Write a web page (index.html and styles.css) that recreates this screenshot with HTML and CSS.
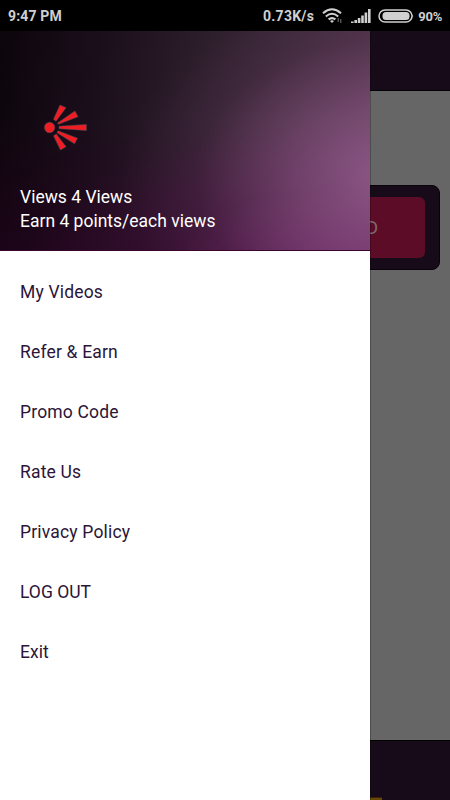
FILE: index.html
```html
<!DOCTYPE html>
<html lang="en">
<head>
<meta charset="utf-8">
<title>Views 4 Views</title>
<link rel="stylesheet" href="styles.css">
</head>
<body>
<div class="phone">
  <header class="status">
    <span class="time">9:47 PM</span>
    <span class="speed">0.73K/s</span>
    <svg class="wifi" width="22" height="16" viewBox="0 0 22 16" fill="none" stroke="#d0d0d0" stroke-width="2">
      <path d="M1 5.2Q10 -2.6 19 5.2M3.8 8.4Q10 3.2 16.2 8.4M6.6 11.4Q10 8.8 13.4 11.4"/>
      <path d="M8 13L10 15L12 13Q10 11.6 8 13Z" fill="#d0d0d0" stroke="none"/>
      <path d="M16.2 10v4M18.8 11v4" stroke="#777" stroke-width="1"/>
    </svg>
    <svg class="signal" width="20" height="14" viewBox="0 0 20 14" fill="#d0d0d0">
      <path d="M0 12.5h2.6V14H0zM3.4 11h2.6v3H3.4zM6.8 9h2.6v5H6.8zM10.2 6.5h2.6V14h-2.6zM13.6 3.5h2.6V14h-2.6zM17 0h2.6v14H17z"/>
    </svg>
    <svg class="battery" width="36" height="14" viewBox="0 0 36 14">
      <rect x="1" y="1" width="33" height="12" rx="6" fill="none" stroke="#d0d0d0" stroke-width="1.5"/>
      <path d="M34.5 5q1.5 2 0 4z" fill="#d0d0d0"/>
      <rect x="4.5" y="3" width="27" height="8" rx="3.5" fill="#d0d0d0"/>
    </svg>
    <span class="percent">90%</span>
  </header>
  <main class="app">
    <div class="toolbar"></div>
    <section class="content">
      <div class="card"><div class="button"><span>D</span></div></div>
    </section>
    <footer class="bottom"><div class="indicator"></div></footer>
    <aside class="drawer">
      <div class="profile">
        <svg class="logo" width="44" height="48" viewBox="0 0 44 48" fill="#ef1c24" stroke="#46525a" stroke-width=".5">
          <circle cx="5.6" cy="24.5" r="5.2"/>
          <path d="M9.5 16.2L16 2L22 4.7L12 18.2ZM13.5 20L31 8L34 13.8L14.5 21.2ZM15 23.2L42.4 21.5V27.5L15 25.7ZM14 27.8L33.5 35.2L30.5 40.8L13 29.8ZM9.5 32.8L12.3 31L22 43.7L16.5 47Z"/>
        </svg>
        <p>Views 4 Views</p>
        <p>Earn 4 points/each views</p>
      </div>
      <nav class="menu">
        <a>My Videos</a>
        <a>Refer &amp; Earn</a>
        <a>Promo Code</a>
        <a>Rate Us</a>
        <a>Privacy Policy</a>
        <a class="caps">LOG OUT</a>
        <a class="caps">Exit</a>
      </nav>
    </aside>
  </main>
</div>
</body>
</html>
```
FILE: styles.css
```css
* { box-sizing: border-box; }
body { margin: 0; font-family: Roboto, "Liberation Sans", sans-serif; }
.phone { width: 450px; height: 800px; display: flex; flex-direction: column; overflow: hidden; }
.status {
  height: 31px; flex: none; display: flex; align-items: center;
  padding: 1px 8px 0; background: #000; color: #d0d0d0;
  font-size: 14px; font-weight: 700; white-space: nowrap;
}
.time { margin-right: auto; letter-spacing: .15px; }
.speed { letter-spacing: .25px; }
.wifi { margin-left: 8px; }
.signal { margin-left: 7px; }
.battery { margin-left: 7px; }
.percent { margin-left: 4px; font-size: 13px; letter-spacing: -.25px; }
.app { position: relative; flex: 1; display: flex; flex-direction: column; background: #666; }
.toolbar { height: 60px; background: #180b19; border-bottom: 1px solid #050006; }
.content { flex: 1; padding: 94px 10px 0; }
.card {
  height: 85px; padding: 11px 14px; border-radius: 8px;
  background: #180b19; border: 1px solid #09020b;
}
.button {
  height: 61px; display: flex; align-items: center; justify-content: flex-end;
  padding-right: 47px; border-radius: 6px; background: #5c0c26;
  color: #7e6a72; font-size: 18px;
}
.bottom {
  height: 60px; padding-left: 10px; display: flex; align-items: flex-end;
  background: #180b19; border-top: 1px solid #000;
}
.indicator { width: 372px; height: 3px; background: #654900; border-top: 1px solid #3b210b; }
.drawer {
  position: absolute; left: 0; top: 0; width: 370px; height: 100%;
  background: #fff; box-shadow: 1px 0 0 #00000040;
}
.profile {
  height: 220px; padding: 72px 20px 0; color: #fff;
  font-size: 17.5px; line-height: 24px;
  border-bottom: 1px solid #39052f;
  background:
    radial-gradient(ellipse 270px 190px at 390px 145px, #a86ca2b8 0%, #9c609480 35%, #7c417428 72%, #7c417400 100%),
    radial-gradient(ellipse 330px 150px at 350px 240px, #8a2f82a6, #5f155740 55%, #5f155700 100%),
    linear-gradient(180deg, #26001f00 40%, #26001f80 100%),
    linear-gradient(97deg, #0c050b 0%, #1b0e1b 25%, #2c1e2b 52%, #3d2a3a 76%, #4f344a 100%);
}
.logo { display: block; margin: 0 0 34px 24px; }
.profile p { margin: 0; }
.menu { display: flex; flex-direction: column; padding-top: 11px; }
.menu a {
  height: 60px; padding: 0 20px; line-height: 61px;
  color: #2b1538; font-size: 17.5px; letter-spacing: .18px;
}
.menu .caps { letter-spacing: 0; }
```
